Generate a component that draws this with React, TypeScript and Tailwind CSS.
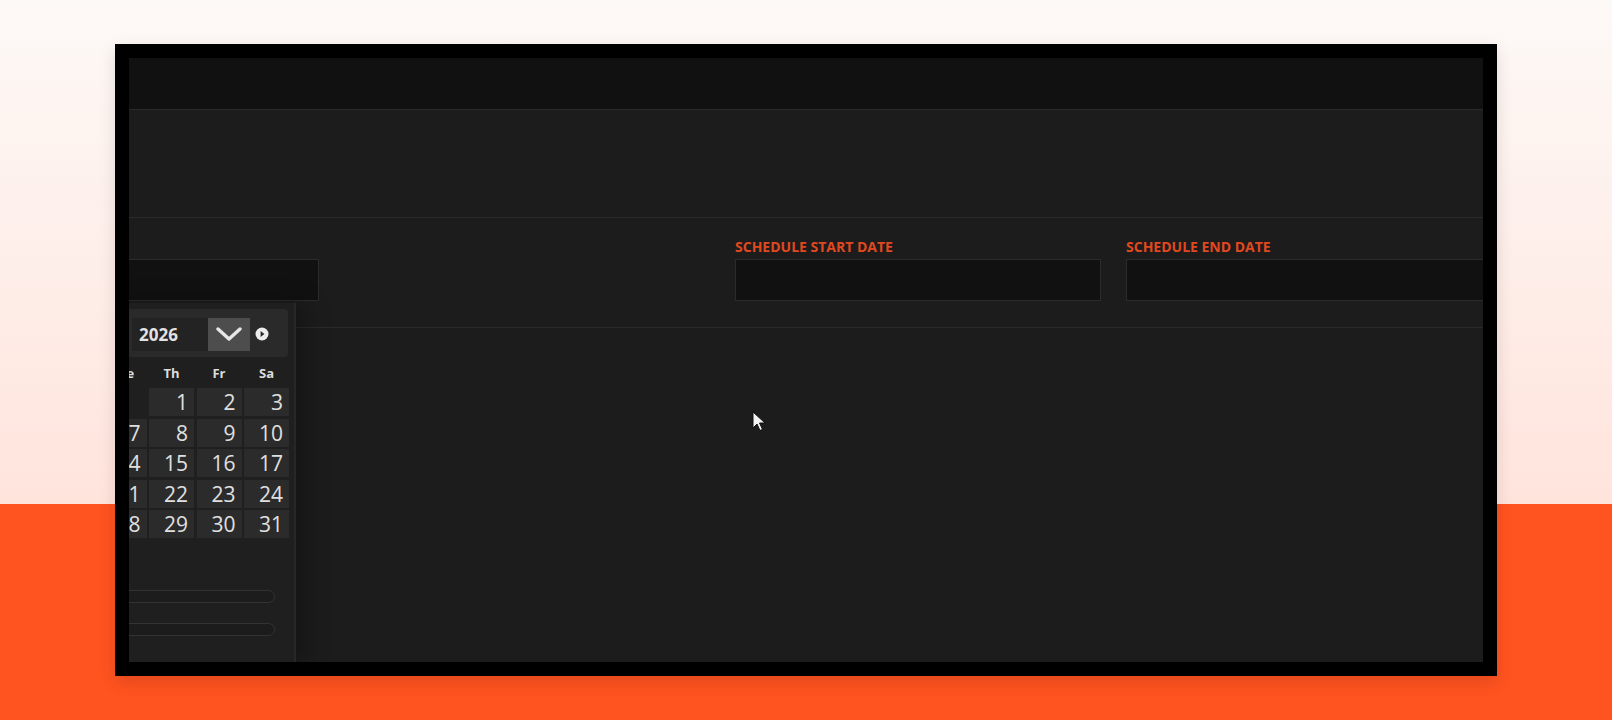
import React from 'react'

const weekDays = ['Su', 'Mo', 'Tu', 'We', 'Th', 'Fr', 'Sa']

// January 2026 starts on a Thursday
const days: (number | null)[] = [null, null, null, null, ...Array.from({ length: 31 }, (_, i) => i + 1)]

function ChevronDown() {
  return (
    <svg width="26" height="14" viewBox="0 0 26 14" fill="none">
      <path d="M2 2l11 10L24 2" stroke="#e6e6e6" strokeWidth="3.4" strokeLinecap="round" strokeLinejoin="round" />
    </svg>
  )
}

function CircleArrow({ dir }: { dir: 'left' | 'right' }) {
  return (
    <svg width="14" height="14" viewBox="0 0 14 14">
      <circle cx="7" cy="7" r="6.5" fill="#ececec" />
      {dir === 'right' ? <path d="M5.6 4L9.4 7l-3.8 3z" fill="#2a2a2a" /> : <path d="M8.4 4L4.6 7l3.8 3z" fill="#2a2a2a" />}
    </svg>
  )
}

function DatePicker() {
  return (
    <div className="absolute left-[-176px] top-[245px] bottom-0 w-[343px] bg-[#1f1f1f] border-r-2 border-[#272727] pl-[6px] pr-[6px] pt-[6px] shadow-[10px_0_22px_rgba(0,0,0,0.28)]">
      {/* month / year selectors */}
      <div className="h-[48px] rounded-[4px] bg-[#2a2a2a] flex items-center pt-[2px] pl-[10px] pr-[19px]">
        <CircleArrow dir="left" />
        <div className="ml-[10px] flex items-center h-[33px] w-[124px] bg-[#232323]">
          <span className="flex-1 pl-[7px] pt-[2px] text-[17px] font-bold text-[#e2e2e2]">January</span>
          <div className="w-[42px] h-[33px] bg-[#4d4d4d] flex items-center justify-center">
            <ChevronDown />
          </div>
        </div>
        <div className="ml-auto flex items-center h-[33px] w-[118px] bg-[#232323]">
          <span className="flex-1 pl-[7px] pt-[2px] text-[17px] font-bold text-[#e2e2e2]">2026</span>
          <div className="w-[42px] h-[33px] bg-[#4d4d4d] flex items-center justify-center">
            <ChevronDown />
          </div>
        </div>
        <div className="ml-[5px] flex">
          <CircleArrow dir="right" />
        </div>
      </div>

      {/* weekday names */}
      <div className="mt-[5px] grid grid-cols-[repeat(7,45px)] gap-x-[2.5px] h-[24px] items-center">
        {weekDays.map((d) => (
          <span key={d} className="text-center text-[13px] font-bold text-[#dcdcdc]">
            {d}
          </span>
        ))}
      </div>

      {/* day grid */}
      <div className="mt-[2px] grid grid-cols-[repeat(7,45px)] gap-x-[2.5px] gap-y-[2.5px]">
        {days.map((d, i) =>
          d === null ? (
            <div key={i} className="h-[28px]" />
          ) : (
            <div
              key={i}
              className="h-[28px] bg-[#2b2b2b] text-right pr-[6px] text-[21px] leading-[28px] text-[#e0e0e0]"
            >
              {d}
            </div>
          )
        )}
      </div>

      {/* time inputs */}
      <div className="mt-[52px] pr-[13px] flex flex-col gap-[20px]">
        <div className="h-[13px] rounded-full border border-[#333] bg-[#1c1c1c]" />
        <div className="h-[13px] rounded-full border border-[#333] bg-[#1c1c1c]" />
      </div>
    </div>
  )
}

function Field({ label, className }: { label?: string; className: string }) {
  return (
    <div className={className}>
      <div className="h-[19px] pt-[1px] text-[14px] leading-[18px] font-bold text-[#e0491f] whitespace-nowrap">{label}</div>
      <div className="mt-[3px] h-[42px] bg-[#111111] border border-[#2b2b2b]" />
    </div>
  )
}

export default function App() {
  return (
    <div className="h-[720px] w-full bg-[linear-gradient(to_bottom,#fdf9f7_0px,#ffe4dc_504px,#ff5320_504px,#ff5320_720px)] pt-[44px] pl-[115px] font-['Open_Sans',sans-serif]">
      <div className="w-[1382px] h-[632px] border-[14px] border-black bg-[#1c1c1c] shadow-[0_6px_16px_rgba(0,0,0,0.12)]">
        <div className="relative h-full overflow-hidden flex flex-col">
          <div className="h-[52px] shrink-0 bg-[#111111] border-b border-[#2a2a2a]" />
          <div className="h-[108px] shrink-0 border-b border-[#2a2a2a]" />

          <div className="h-[110px] shrink-0 border-b border-[#2a2a2a] flex items-start pt-[19px]">
            <Field className="w-[190px] shrink-0 [&>div:last-child]:border-l-0" />
            <Field label="SCHEDULE START DATE" className="ml-[416px] w-[366px] shrink-0" />
            <Field label="SCHEDULE END DATE" className="ml-[25px] w-[400px] shrink-0" />
          </div>

          <div className="flex-1" />

          <DatePicker />

          {/* mouse pointer */}
          <svg className="absolute left-[623px] top-[353px]" width="14" height="21" viewBox="0 0 14 21">
            <path d="M1 1v16l4-4 3 6.5 2.5-1.2-3-6.3H13z" fill="#f4f4f4" stroke="#111" strokeWidth="1" strokeLinejoin="round" />
          </svg>
        </div>
      </div>
    </div>
  )
}
